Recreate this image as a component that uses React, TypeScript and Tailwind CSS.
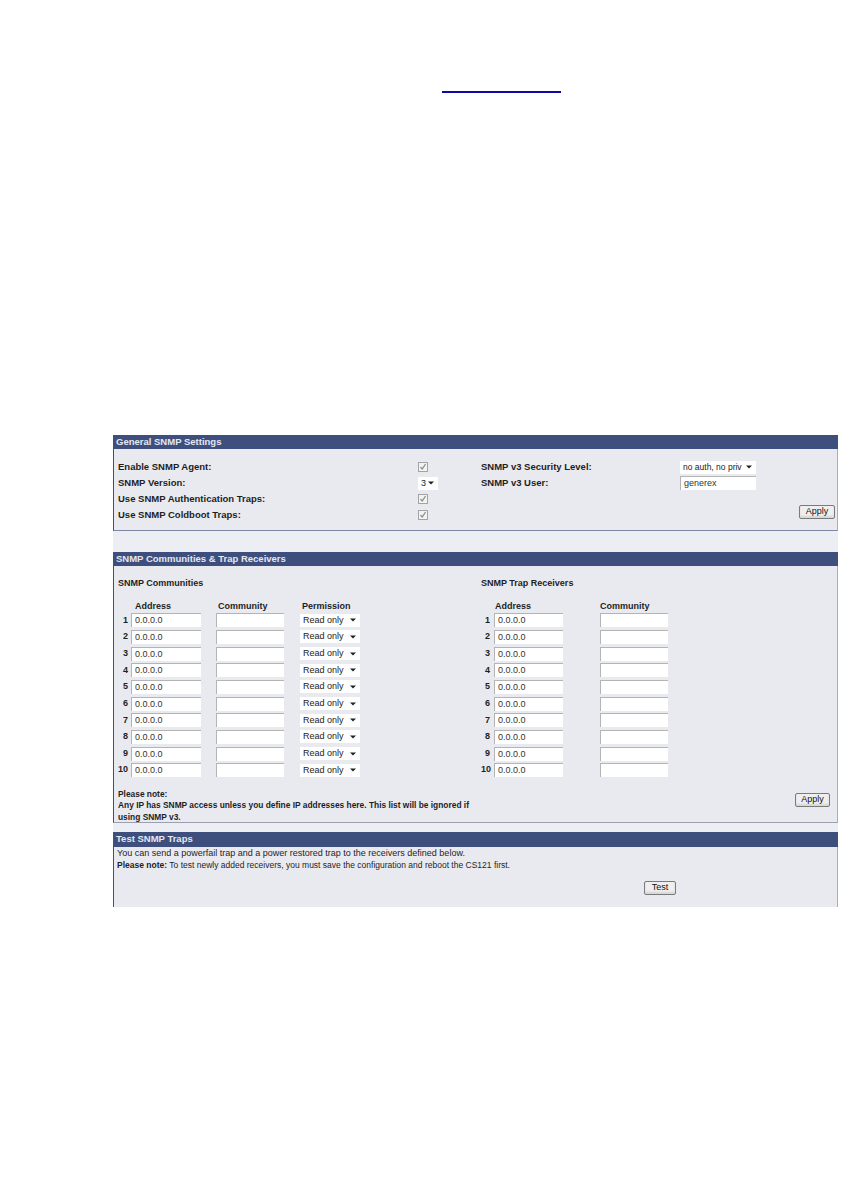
import React from "react";

const font = { fontFamily: '"Liberation Sans", Arial, sans-serif' };

function Arrow() {
  return (
    <svg width="6" height="4" viewBox="0 0 6 4" className="shrink-0">
      <path d="M0 0.5 L6 0.5 L3 3.5 Z" fill="#222" />
    </svg>
  );
}

function Check() {
  return (
    <div className="w-[10px] h-[10px] border border-[#a3a3a3] bg-[#f3f3f3] flex items-center justify-center">
      <svg width="8" height="8" viewBox="0 0 8 8">
        <path d="M1.5 4 L3.2 6 L6.5 1.2" stroke="#8a8a8a" strokeWidth="1.2" fill="none" />
      </svg>
    </div>
  );
}

function Sel({ w, text, small }: { w: string; text: string; small?: boolean }) {
  return (
    <div className={`${w} h-[13px] bg-white flex items-center justify-between pl-[3px] pr-[4px] ${small ? "text-[8.5px]" : "text-[9px]"} font-normal text-[#222]`}>
      <span className="leading-[13px] whitespace-nowrap">{text}</span>
      <Arrow />
    </div>
  );
}

function Inp({ w, text }: { w: string; text?: string }) {
  return (
    <div className={`${w} h-[14px] bg-white border-t border-l border-[#b4b4b4] pl-[3px] text-[9px] font-normal text-[#333] leading-[13px] whitespace-nowrap`}>
      {text}
    </div>
  );
}

function Btn({ label, w }: { label: string; w: string }) {
  return (
    <div className={`${w} h-[14px] border border-[#7a7a7a] rounded-[2px] bg-[#efefef] flex items-center justify-center text-[9px] text-[#111] font-normal shadow-[inset_0_-2px_2px_#d6d6d6]`}>
      {label}
    </div>
  );
}

function Header({ title, h }: { title: string; h: string }) {
  return (
    <div className={`${h} bg-[#3e4f7d] text-[#e4e8f1] font-bold text-[9.5px] pl-[3px] flex items-center`}>
      {title}
    </div>
  );
}

const rows = [1, 2, 3, 4, 5, 6, 7, 8, 9, 10];

export default function App() {
  return (
    <div className="w-[842px] h-[1191px] bg-white text-[#1e1e1e]" style={font}>
      <div className="pt-[91px]">
        <div className="ml-[442px] w-[119px] h-[2px] bg-[#0a0aaa]" />
      </div>
      <div className="mt-[342px] ml-[113px] w-[725px] h-[472px] bg-[#eceef3]">
        {/* Panel 1 */}
        <Header title="General SNMP Settings" h="h-[14px]" />
        <div className="h-[82px] bg-[#e9eaf0] border-l border-l-[#3e4f7d] border-r border-r-[#a9aebd] border-b border-b-[#7c88a6] flex text-[9.5px] font-bold">
          <div className="w-[367px] pl-[4px] pt-[10px] flex flex-col">
            <div className="h-[16px] flex items-center">
              <div className="w-[300px]">Enable SNMP Agent:</div>
              <Check />
            </div>
            <div className="h-[16px] flex items-center">
              <div className="w-[300px]">SNMP Version:</div>
              <Sel w="w-[20px]" text="3" />
            </div>
            <div className="h-[16px] flex items-center">
              <div className="w-[300px]">Use SNMP Authentication Traps:</div>
              <Check />
            </div>
            <div className="h-[16px] flex items-center">
              <div className="w-[300px]">Use SNMP Coldboot Traps:</div>
              <Check />
            </div>
          </div>
          <div className="flex-1 pt-[10px] flex flex-col">
            <div className="h-[16px] flex items-center">
              <div className="w-[199px]">SNMP v3 Security Level:</div>
              <Sel w="w-[76px]" text="no auth, no priv" small />
            </div>
            <div className="h-[16px] flex items-center">
              <div className="w-[199px]">SNMP v3 User:</div>
              <Inp w="w-[76px]" text="generex" />
            </div>
            <div className="mt-[14px] flex justify-end pr-[2px]">
              <Btn label="Apply" w="w-[36px]" />
            </div>
          </div>
        </div>
        <div className="h-[21px]" />
        {/* Panel 2 */}
        <Header title="SNMP Communities & Trap Receivers" h="h-[14px]" />
        <div className="h-[257px] bg-[#e9eaf0] border-l border-l-[#3e4f7d] border-r border-r-[#a9aebd] border-b border-b-[#9aa0b2] text-[9px] font-bold pt-[12px] flex flex-col">
          <div className="shrink-0 h-[12px] flex items-center">
            <div className="w-[367px] pl-[4px]">SNMP Communities</div>
            <div>SNMP Trap Receivers</div>
          </div>
          <div className="shrink-0 mt-[11px] h-[11px] flex items-center">
            <div className="w-[367px] pl-[4px] flex">
              <div className="w-[15px]" />
              <div className="w-[70px] pl-[2px]">Address</div>
              <div className="ml-[15px] w-[68px]">Community</div>
              <div className="ml-[16px] w-[60px]">Permission</div>
            </div>
            <div className="flex">
              <div className="w-[13px]" />
              <div className="w-[69px] pl-[1px]">Address</div>
              <div className="ml-[37px] w-[68px]">Community</div>
            </div>
          </div>
          {rows.map((n) => (
            <div key={n} className="shrink-0 h-[16.67px] flex items-center">
              <div className="w-[367px] pl-[4px] flex items-center">
                <div className="w-[10px] text-right">{n}</div>
                <div className="ml-[3px]"><Inp w="w-[70px]" text="0.0.0.0" /></div>
                <div className="ml-[15px]"><Inp w="w-[68px]" /></div>
                <div className="ml-[16px]"><Sel w="w-[60px]" text="Read only" /></div>
              </div>
              <div className="flex items-center">
                <div className="w-[9px] text-right">{n}</div>
                <div className="ml-[4px]"><Inp w="w-[69px]" text="0.0.0.0" /></div>
                <div className="ml-[37px]"><Inp w="w-[68px]" /></div>
              </div>
            </div>
          ))}
          <div className="shrink-0 mt-[10px] flex items-start">
            <div className="pl-[4px] leading-[11.5px] text-[8.4px]">
              Please note:
              <br />
              Any IP has SNMP access unless you define IP addresses here. This list will be ignored if
              <br />
              using SNMP v3.
            </div>
            <div className="ml-auto mr-[7px] mt-[4px]">
              <Btn label="Apply" w="w-[35px]" />
            </div>
          </div>
        </div>
        <div className="h-[9px]" />
        {/* Panel 3 */}
        <Header title="Test SNMP Traps" h="h-[15px]" />
        <div className="h-[60px] bg-[#e9eaf0] border-l border-l-[#3e4f7d] border-r border-r-[#a9aebd] text-[9px] pl-[3px]">
          <div className="leading-[12px]">You can send a powerfail trap and a power restored trap to the receivers defined below.</div>
          <div className="leading-[12px] text-[8.5px]">
            <span className="font-bold">Please note:</span> To test newly added receivers, you must save the configuration and reboot the CS121 first.
          </div>
          <div className="mt-[10px] ml-[527px]">
            <Btn label="Test" w="w-[32px]" />
          </div>
        </div>
      </div>
    </div>
  );
}
